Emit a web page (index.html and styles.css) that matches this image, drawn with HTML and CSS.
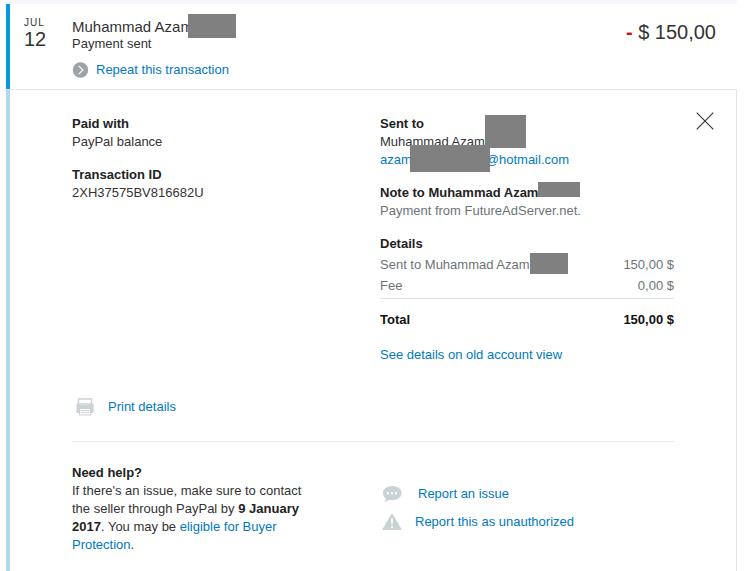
FILE: index.html
```html
<!DOCTYPE html>
<html lang="en">
<head>
<meta charset="utf-8">
<title>Transaction details</title>
<link rel="stylesheet" href="styles.css">
</head>
<body>
<main class="transaction">
  <header class="summary">
    <time class="date" datetime="07-12"><span class="month">JUL</span><span class="day">12</span></time>
    <div class="summary-main">
      <h1 class="name"><span class="masked">Muhammad Azam<span class="mask mask-name"></span></span></h1>
      <p class="status">Payment sent</p>
      <a class="repeat" href="#">
        <svg class="repeat-icon" viewBox="0 0 16 16" aria-hidden="true"><circle cx="8" cy="8" r="7.7" fill="#9da3a6"/><path d="M6.2 3.8 10.4 8l-4.2 4.2" fill="none" stroke="#fff" stroke-width="1.1"/></svg>
        Repeat this transaction
      </a>
    </div>
    <p class="amount"><span class="minus">-</span> $ 150,00</p>
  </header>

  <div class="details">
    <button class="close" type="button" aria-label="Close">
      <svg viewBox="0 0 18 18" aria-hidden="true"><path d="M.7.7l16.6 16.6M17.3.7.7 17.3" fill="none" stroke="#333" stroke-width="1.1"/></svg>
    </button>
    <div class="columns">
      <div class="left">
        <section class="block">
          <h2>Paid with</h2>
          <p>PayPal balance</p>
        </section>
        <section class="block">
          <h2>Transaction ID</h2>
          <p>2XH37575BV816682U</p>
        </section>
      </div>
      <div class="right">
        <section class="block">
          <h2>Sent to</h2>
          <p><span class="masked">Muhammad Azam<span class="mask mask-recipient"></span></span></p>
          <p><a href="#"><span class="masked">azam<span class="mask mask-email"></span></span><span class="domain">@hotmail.com</span></a></p>
        </section>
        <section class="block">
          <h2><span class="masked">Note to Muhammad Azam<span class="mask mask-note"></span></span></h2>
          <p class="muted">Payment from FutureAdServer.net.</p>
        </section>
        <section>
          <h2>Details</h2>
          <table class="costs">
            <tbody>
              <tr><th scope="row"><span class="masked">Sent to Muhammad Azam<span class="mask mask-cost"></span></span></th><td>150,00 $</td></tr>
              <tr><th scope="row">Fee</th><td>0,00 $</td></tr>
            </tbody>
            <tfoot>
              <tr><th scope="row">Total</th><td>150,00 $</td></tr>
            </tfoot>
          </table>
          <a class="old-view" href="#">See details on old account view</a>
        </section>
      </div>
    </div>

    <a class="print" href="#">
      <svg class="print-icon" viewBox="0 0 18 18" aria-hidden="true">
        <path d="M2.500 6V1h13v5z" fill="#fff" stroke="#cbd2d6" stroke-width="1.400"/>
        <path d="M1.500 5.500h1.500V7h12V5.500h1.500q1 0 1 1V14q0 1-1 1h-15q-1 0-1-1V6.500q0-1 1-1z" fill="#cbd2d6"/>
        <path d="M3 10.500h12V17.500H3z" fill="#cbd2d6"/>
        <path d="M4 11h10v5.500H4z" fill="#fff"/>
        <path d="M5 12.500h8M5 14.700h8" stroke="#cbd2d6" stroke-width="1.100"/>
      </svg>
      Print details
    </a>

    <div class="columns help">
      <section class="help-text">
        <h2>Need help?</h2>
        <p>If there's an issue, make sure to contact the seller through PayPal by <strong>9 January 2017</strong>. You may be <a href="#">eligible for Buyer Protection</a>.</p>
      </section>
      <div class="reports">
        <a class="report issue" href="#">
          <svg class="report-icon" viewBox="0 0 20 18" aria-hidden="true"><path d="M10.500 1C5.100 1 1 3.900 1 8c0 2.300 1.200 4.300 3.100 5.500-.3 1.400-1 2.400-2.300 3.300 2.300 0 4.200-.8 5.300-2 .9.200 2.200.3 3.400.3 5.300 0 9.200-3 9.200-7.100S15.800 1 10.500 1z" fill="#cbd2d6"/><path d="M5 7.200h2v2H5zM9 7.200h2v2H9zM13 7.200h2v2h-2z" fill="#fff"/></svg>
          Report an issue
        </a>
        <a class="report unauthorized" href="#">
          <svg class="report-icon" viewBox="0 0 20 18" aria-hidden="true"><path d="M9 1.400Q10 .2 11 1.400L19.700 16.500Q19.900 17 19 17H1Q.1 17 .3 16.500z" fill="#cbd2d6"/><path d="M9 5.500h2l-.4 6.300H9.400zM9.100 13h1.800v1.800H9.100z" fill="#fff"/></svg>
          Report this as unauthorized
        </a>
      </div>
    </div>
  </div>
</main>
</body>
</html>
```
FILE: styles.css
```css
* { box-sizing: border-box; }

body {
  margin: 0;
  background: #fff;
  color: #333;
  font: 13px/18px "Liberation Sans", Arial, sans-serif;
}

h1, h2, p { margin: 0; font-size: inherit; }
h1 { font-weight: normal; }
h2, strong { color: #222; font-weight: bold; }
a { color: #0079c1; text-decoration: none; }
svg { display: block; flex: none; }

.transaction {
  display: flex;
  flex-direction: column;
  min-height: 100vh;
  margin: 0 9px 0 6px;
  border-top: 4px solid #f5f7fa;
}

/* Summary row */
.summary {
  display: flex;
  align-items: flex-start;
  padding: 12px 21px 10px 14px;
  border-left: 4px solid #009cde;
}
.date { flex: none; width: 48px; color: #333; }
.month, .day { display: block; }
.month { font-size: 10px; line-height: 14px; letter-spacing: 1px; }
.day { font-size: 20px; line-height: 18px; }
.summary-main { flex: 1; }
.name { font-size: 15px; line-height: 22px; }
.status { line-height: 12px; }
.repeat { display: flex; align-items: center; gap: 7px; width: fit-content; margin-top: 11px; line-height: 18px; }
.repeat-icon { width: 17px; height: 16px; }
.amount { font-size: 20px; line-height: 32px; }
.minus { color: #c01818; font-weight: bold; }

/* Masked personal data */
.masked { position: relative; }
.mask { position: absolute; left: 100%; background: #808080; }
.mask-name { top: -4px; width: 48px; height: 24px; margin-left: -5px; }
.mask-recipient { top: -19px; width: 41px; height: 33px; }
.mask-email { top: -7px; width: 80px; height: 27px; margin-left: -2px; z-index: 1; }
.mask-note { top: -3px; width: 42px; height: 15px; }
.mask-cost { top: -4px; width: 38px; height: 21px; }
.domain { margin-left: 74px; }

/* Expanded details */
.details {
  position: relative;
  flex: 1;
  padding: 25px 62px 16px 66px;
  border: 1px solid #e1e7eb;
  border-width: 1px 1px 0 0;
  box-shadow: inset 4px 0 #afdaeb;
}
.close {
  position: absolute;
  top: 22px;
  right: 22px;
  padding: 0;
  border: 0;
  background: none;
}
.close svg { width: 18px; height: 18px; }
.columns { display: grid; grid-template-columns: 308fr 294fr; }
.block { margin-bottom: 15px; }
.muted { color: #6c7378; }

.costs { width: 100%; border-collapse: collapse; color: #6c7378; }
.costs th, .costs td { padding: 0; line-height: 21px; font-weight: normal; text-align: left; }
.costs td { text-align: right; }
.costs tbody { border-bottom: 1px solid #dbe4ea; }
.costs tbody tr:first-child > * { padding-top: 1px; }
.costs tbody tr:last-child > * { padding-bottom: 2px; }
.costs tfoot th, .costs tfoot td { padding-top: 10px; color: #111; font-weight: bold; }
.old-view { display: block; width: fit-content; margin-top: 16px; }

.print { display: flex; align-items: center; gap: 14px; width: fit-content; margin: 34px 0 0 4px; }
.print-icon { width: 18px; height: 18px; }

.help { margin-top: 25px; padding-top: 22px; border-top: 1px solid #ebebeb; }
.help-text { padding-right: 60px; }
.reports { display: flex; flex-direction: column; align-items: flex-start; gap: 10px; padding: 21px 0 0 2px; }
.report { display: flex; align-items: center; }
.report-icon { width: 20px; height: 18px; }
.issue { gap: 16px; }
.unauthorized { gap: 13px; }
```
